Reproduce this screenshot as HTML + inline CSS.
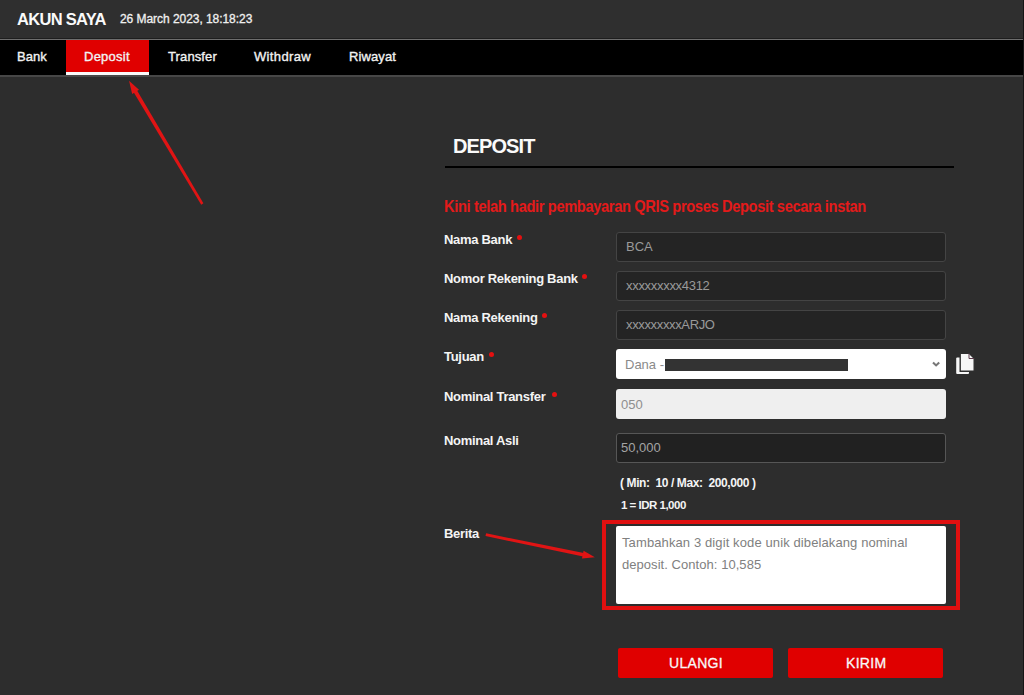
<!DOCTYPE html>
<html>
<head>
<meta charset="utf-8">
<style>
*{margin:0;padding:0;box-sizing:border-box}
html,body{width:1024px;height:695px;overflow:hidden;background:#2d2d2d;font-family:"Liberation Sans",sans-serif;color:#fff}
.a{position:absolute;white-space:pre;line-height:1}
#hdr{position:absolute;left:0;top:0;width:1024px;height:39px;background:#2f2f2f}
#hl{position:absolute;left:0;top:38px;width:1024px;height:1px;background:#1e1e1e}
#hl2{position:absolute;left:0;top:39px;width:1024px;height:1px;background:#6e6e6e}
#nav{position:absolute;left:0;top:40px;width:1024px;height:35px;background:#000}
#nl{position:absolute;left:0;top:75px;width:1024px;height:2px;background:#474747}
#tab{position:absolute;left:66px;top:40px;width:83px;height:32px;background:#e00000}
#tabu{position:absolute;left:66px;top:72px;width:83px;height:3px;background:#fafafa}
.nav{font-size:13px;color:#f2f2f2;-webkit-text-stroke:0.35px #f2f2f2}
.lbl{font-size:13px;font-weight:bold;color:#f4f4f4;letter-spacing:-0.3px}
.ast{position:absolute;width:5px;height:5px;border-radius:50%;background:#e41010}
.inp{position:absolute;left:616px;width:330px;border:1px solid #444;background:#242424;border-radius:3px}
.itx{font-size:13px;color:#9a9a9a}
.btn{position:absolute;top:648px;height:30px;background:#e00000;border-radius:2px}
.btxt{font-size:14px;color:#f8f8f8;-webkit-text-stroke:0.3px #f8f8f8}
</style>
</head>
<body>
<div id="hdr"></div>
<div id="hl"></div>
<div id="hl2"></div>
<div class="a" style="left:17px;top:11px;font-size:16.5px;font-weight:bold;letter-spacing:-0.7px;color:#fafafa">AKUN SAYA</div>
<div class="a" style="left:120px;top:13px;font-size:12px;color:#f0f0f0;-webkit-text-stroke:0.3px #f0f0f0;letter-spacing:-0.05px">26 March 2023, 18:18:23</div>

<div id="nav"></div>
<div id="nl"></div>
<div id="tab"></div>
<div id="tabu"></div>
<div class="a nav" style="left:17px;top:50px">Bank</div>
<div class="a nav" style="left:84px;top:50px;letter-spacing:0.25px">Deposit</div>
<div class="a nav" style="left:168px;top:50px;letter-spacing:0.12px">Transfer</div>
<div class="a nav" style="left:254px;top:50px;letter-spacing:0.35px">Withdraw</div>
<div class="a nav" style="left:349px;top:50px;letter-spacing:0.1px">Riwayat</div>

<!-- title -->
<div class="a" style="left:453px;top:136px;font-size:20px;font-weight:bold;letter-spacing:-0.9px;color:#fafafa">DEPOSIT</div>
<div style="position:absolute;left:445px;top:166px;width:509px;height:2px;background:#000"></div>

<div class="a" style="left:444px;top:198px;font-size:16.3px;font-weight:bold;color:#e41a1a;letter-spacing:-0.4px;transform:scaleX(0.9);transform-origin:0 0">Kini telah hadir pembayaran QRIS proses Deposit secara instan</div>

<!-- labels -->
<div class="a lbl" style="left:444px;top:233px">Nama Bank</div>
<div class="ast" style="left:517px;top:235px"></div>
<div class="a lbl" style="left:444px;top:272px">Nomor Rekening Bank</div>
<div class="ast" style="left:582px;top:274px"></div>
<div class="a lbl" style="left:444px;top:311px">Nama Rekening</div>
<div class="ast" style="left:542px;top:313px"></div>
<div class="a lbl" style="left:444px;top:350px">Tujuan</div>
<div class="ast" style="left:489px;top:352px"></div>
<div class="a lbl" style="left:444px;top:390px">Nominal Transfer</div>
<div class="ast" style="left:552px;top:392px"></div>
<div class="a lbl" style="left:444px;top:434px">Nominal Asli</div>
<div class="a lbl" style="left:444px;top:527px">Berita</div>

<!-- inputs -->
<div class="inp" style="top:232px;height:30px"></div>
<div class="a itx" style="left:626px;top:240px">BCA</div>
<div class="inp" style="top:271px;height:30px"></div>
<div class="a itx" style="left:626px;top:279px;letter-spacing:-0.3px">xxxxxxxxx4312</div>
<div class="inp" style="top:310px;height:30px"></div>
<div class="a itx" style="left:626px;top:318px;letter-spacing:-0.35px">xxxxxxxxxARJO</div>

<div style="position:absolute;left:616px;top:349px;width:330px;height:30px;background:#fff;border-radius:3px"></div>
<div class="a" style="left:625px;top:358px;font-size:13px;color:#8a8a8a">Dana -</div>
<div style="position:absolute;left:665px;top:359px;width:183px;height:12px;background:#333"></div>
<svg style="position:absolute;left:931px;top:360px" width="11" height="8" viewBox="0 0 11 8"><path d="M2 2.4 L5.1 5.4 L8.2 2.4" fill="none" stroke="#777" stroke-width="2.1"/></svg>
<!-- copy icon -->
<svg style="position:absolute;left:954px;top:352px" width="22" height="24" viewBox="0 0 22 24">
<rect x="2.2" y="5.4" width="12.8" height="16.6" rx="1" fill="#f6f6f6"/>
<path d="M6.2 1.2 H15.2 L20.2 6.2 V19.2 H6.2 Z" fill="#f6f6f6" stroke="#2e2e2e" stroke-width="1.4"/>
<path d="M15 1.5 V6.5 H20" fill="none" stroke="#5a3a4a" stroke-width="1"/>
</svg>

<div style="position:absolute;left:616px;top:389px;width:330px;height:30px;background:#efefef;border-radius:3px"></div>
<div class="a" style="left:621px;top:398px;font-size:13px;color:#8e8e8e">050</div>
<div class="inp" style="top:433px;height:30px;border-color:#565656;background:#212121"></div>
<div class="a itx" style="left:621px;top:441px;color:#a4a4a4">50,000</div>

<div class="a" style="left:620px;top:477px;font-size:12px;font-weight:bold;color:#f4f4f4;letter-spacing:-0.4px">( Min:  10 / Max:  200,000 )</div>
<div class="a" style="left:621px;top:500px;font-size:11.5px;font-weight:bold;color:#f4f4f4;letter-spacing:-0.5px">1 = IDR 1,000</div>

<!-- textarea -->
<div style="position:absolute;left:602px;top:520px;width:358px;height:90px;border:4px solid #e01010"></div>
<div style="position:absolute;left:616px;top:526px;width:330px;height:78px;background:#fff;border-radius:2px"></div>
<div class="a" style="left:622px;top:536px;font-size:13px;color:#808080;letter-spacing:0.11px">Tambahkan 3 digit kode unik dibelakang nominal</div>
<div class="a" style="left:622px;top:558px;font-size:13px;color:#808080;letter-spacing:0.05px">deposit. Contoh: 10,585</div>

<!-- buttons -->
<div class="btn" style="left:618px;width:155px"></div>
<div class="a btxt" style="left:669px;top:656px;letter-spacing:0.3px">ULANGI</div>
<div class="btn" style="left:788px;width:155px"></div>
<div class="a btxt" style="left:846px;top:656px;letter-spacing:0.3px">KIRIM</div>

<!-- arrows -->
<svg style="position:absolute;left:0;top:0" width="1024" height="695">
<polygon points="203.4,203.3 136.2,89.1 132.9,91.1 201.2,204.7" fill="#e01414"/>
<polygon points="129.0,80.8 139.0,89.7 132.2,93.9" fill="#e01414"/>
<polygon points="485.5,536.1 584.4,556.7 585.1,553.3 486.1,533.3" fill="#e01414"/>
<polygon points="594.8,557.2 582.0,558.5 583.6,550.7" fill="#e01414"/>
</svg>
<div style="position:absolute;left:1023px;top:0;width:1px;height:695px;background:#151515"></div>
</body>
</html>
